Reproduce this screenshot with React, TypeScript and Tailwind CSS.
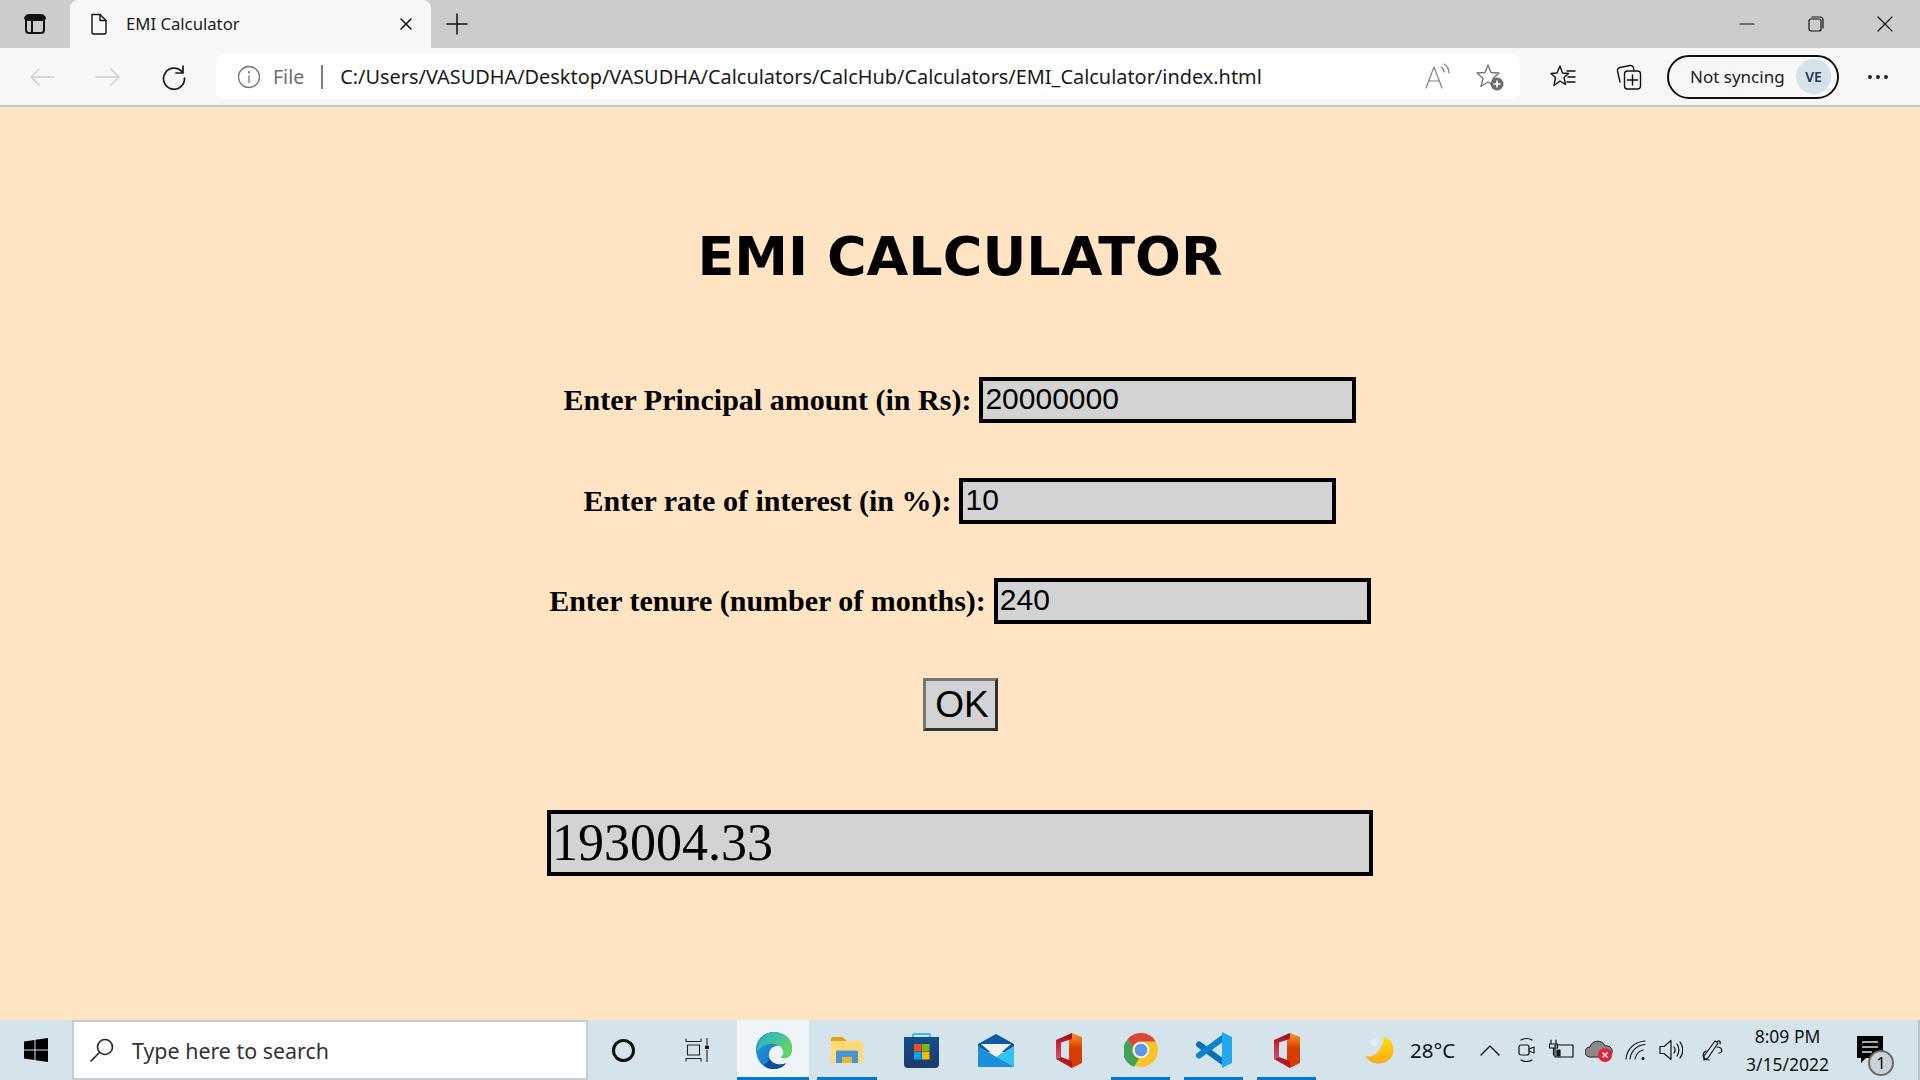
import React from 'react';

const uiFont = { fontFamily: '"Noto Sans", "Open Sans", sans-serif' };

const TileLine: React.FC<{ active?: boolean }> = ({ active }) =>
  active ? <div className="absolute bottom-0 left-0 right-0 h-[3px] bg-[#0078d4]" /> : null;

const Stroke: React.FC<{ w: number; h: number; sw?: number; color?: string; children: React.ReactNode }> = ({ w, h, sw = 1.5, color = '#111', children }) => (
  <svg width={w} height={h} viewBox={`0 0 ${w} ${h}`} fill="none" stroke={color} strokeWidth={sw} strokeLinecap="round" strokeLinejoin="round">
    {children}
  </svg>
);

const EdgeLogo = () => (
  <svg width="37" height="37" viewBox="0 0 38 38">
    <defs>
      <linearGradient id="edgeA" x1="0" y1="0" x2="1" y2="1">
        <stop offset="0" stopColor="#1fa2d8" />
        <stop offset="0.55" stopColor="#1b7fd0" />
        <stop offset="1" stopColor="#0f5aa8" />
      </linearGradient>
      <linearGradient id="edgeB" x1="0" y1="0" x2="1" y2="0.6">
        <stop offset="0" stopColor="#27a9dc" />
        <stop offset="1" stopColor="#62d860" />
      </linearGradient>
    </defs>
    <path d="M19 0C9 0 1 8 1 18c0 11 8 20 17 20 6 0 11-2 14-6-7 3-15 1-17-5-2-5 0-10 5-12 4-2 9-1 11 2 3 3 4 5 4 8 2-2 3-5 3-8C38 7 30 0 19 0z" fill="url(#edgeA)" />
    <path d="M19 0c11 0 19 7 19 17 0 3-1 6-3 8-1 2-4 2-6 2-1 0-2 0-3-1 2-1 3-3 3-5 0-5-5-9-12-9-5 0-10 2-15 8C3 9 9 0 19 0z" fill="url(#edgeB)" />
    <path d="M15 27c2 6 10 8 17 5-3 4-8 6-14 6-3 0-7-2-9-5 2 0 5-2 6-6z" fill="#114f9a" />
  </svg>
);

const ExplorerLogo = () => (
  <svg width="32" height="26" viewBox="0 0 32 26">
    <path d="M0 2a2 2 0 0 1 2-2h9l4 3v3H0z" fill="#e0a40c" />
    <path d="M0 4h30a2 2 0 0 1 2 2v18a2 2 0 0 1-2 2H2a2 2 0 0 1-2-2z" fill="#fddc78" />
    <path d="M5 26V15a1.500 1.500 0 0 1 1.500-1.500h19A1.500 1.500 0 0 1 27 15v11h-6v-6H11v6z" fill="#4a94d2" />
    <rect x="11" y="20" width="10" height="6" fill="#edb62c" />
  </svg>
);

const StoreLogo = () => (
  <svg width="35" height="35" viewBox="0 0 35 35">
    <defs>
      <linearGradient id="storeBody" x1="0" y1="0" x2="0" y2="1">
        <stop offset="0" stopColor="#12508f" />
        <stop offset="1" stopColor="#1c3a68" />
      </linearGradient>
    </defs>
    <path d="M9 6V2a1 1 0 0 1 1-1h15a1 1 0 0 1 1 1v4" fill="none" stroke="#38bdf0" strokeWidth="2" />
    <path d="M0 4h35v27a4 4 0 0 1-4 4H4a4 4 0 0 1-4-4z" fill="url(#storeBody)" />
    <rect x="10" y="11" width="7.500" height="7.500" fill="#f25022" />
    <rect x="18" y="11" width="7.500" height="7.500" fill="#7fba00" />
    <rect x="10" y="19" width="7.500" height="7.500" fill="#00a4ef" />
    <rect x="18" y="19" width="7.500" height="7.500" fill="#ffb900" />
  </svg>
);

const MailLogo = () => (
  <svg width="36" height="33" viewBox="0 0 36 33">
    <path d="M0 10 18 0l18 10v8H0z" fill="#0c59a4" />
    <path d="M3 10h30l-15 13z" fill="#f1f1f1" />
    <path d="M0 12l18 11 18-11v21H0z" fill="#33c2f1" />
    <path d="M0 33V12l18 11 18 10z" fill="#1a8fdb" />
  </svg>
);

const OfficeLogo: React.FC<{ id: string }> = ({ id }) => (
  <svg width="28" height="35" viewBox="0 0 28 35">
    <defs>
      <linearGradient id={`${id}R`} x1="0" y1="0" x2="0" y2="1">
        <stop offset="0" stopColor="#f7982a" />
        <stop offset="0.45" stopColor="#d83b01" />
        <stop offset="1" stopColor="#d83b01" />
      </linearGradient>
      <linearGradient id={`${id}L`} x1="0" y1="0" x2="0" y2="1">
        <stop offset="0" stopColor="#8f1015" />
        <stop offset="0.5" stopColor="#d02a3a" />
        <stop offset="1" stopColor="#c2557e" />
      </linearGradient>
    </defs>
    <path d="M14 3 17 0l10 4v26l-10 5-3-2z" fill={`url(#${id}R)`} />
    <path d="M1 7 17 0v6L6 9.500V24l-5 2z" fill={`url(#${id}L)`} />
    <path d="M1 26l5-2 11 4v7z" fill="#b81525" />
  </svg>
);

const ChromeLogo = () => (
  <svg width="34" height="34" viewBox="0 0 34 34">
    <circle cx="17" cy="17" r="17" fill="#fbc42b" />
    <path d="M17 0a17 17 0 0 1 14.7 8.5H17a8.5 8.5 0 0 0-8 5.500L3.500 6.500A17 17 0 0 1 17 0z" fill="#d9473c" />
    <path d="M3.500 6.500 9 14a8.500 8.500 0 0 0 6 11.500L10 34A17 17 0 0 1 3.500 6.500z" fill="#3da45a" />
    <circle cx="17" cy="17" r="8" fill="#fff" />
    <circle cx="17" cy="17" r="6.500" fill="#5a95ee" />
  </svg>
);

const VsCodeLogo = () => (
  <svg width="36" height="36" viewBox="0 0 36 36">
    <path d="M3 12.500 27 30" stroke="#0a70b8" strokeWidth="6" strokeLinecap="round" fill="none" />
    <path d="M3 23.500 27 6" stroke="#0d83cf" strokeWidth="6" strokeLinecap="round" fill="none" />
    <path d="M26 0 36 5v26l-10 5z" fill="#22a8f0" />
  </svg>
);

const Tile: React.FC<{ w: string; active?: boolean; line?: boolean; children: React.ReactNode }> = ({ w, active, line, children }) => (
  <div className={`relative h-full flex items-center justify-center ${w} ${active ? 'bg-[#eef4f8]' : ''}`}>
    {children}
    <TileLine active={active || line} />
  </div>
);

const BrowserChrome = () => (
  <div style={uiFont} className="shrink-0">
    <div className="h-12 bg-[#cccccc] flex items-end">
      <div className="w-[70px] h-12 flex items-center justify-center">
        <Stroke w={22} h={22} sw={2}>
          <rect x="2" y="2" width="18" height="18" rx="3" />
          <path d="M2 7h18M8 7v13" />
          <path d="M2 5h18" strokeWidth={4} />
        </Stroke>
      </div>
      <div className="w-[361px] h-12 bg-[#f7f7f7] rounded-t-lg flex items-center pl-[19px] pr-[18px]">
        <Stroke w={20} h={24} sw={1.4}>
          <path d="M3 2.500h8l6 6v12a1.500 1.500 0 0 1-1.500 1.500h-11a1.500 1.500 0 0 1-1.500-1.500z" />
          <path d="M11 2.500v6h6" />
        </Stroke>
        <span className="ml-[17px] text-[16.7px] text-[#1a1a1a]">EMI Calculator</span>
        <span className="ml-auto">
          <Stroke w={14} h={14} sw={1.6}><path d="M2 2l10 10M12 2 2 12" /></Stroke>
        </span>
      </div>
      <div className="w-[15px] h-12" />
      <div className="h-12 flex items-center">
        <Stroke w={22} h={22} sw={1.5}><path d="M11 1v20M1 11h20" /></Stroke>
      </div>
      <div className="ml-auto h-12 flex items-center">
        <div className="w-[68px] flex justify-center"><Stroke w={16} h={16} sw={1.2}><path d="M1 8h14" /></Stroke></div>
        <div className="w-[69px] flex justify-center">
          <Stroke w={16} h={16} sw={1.2}>
            <rect x="1" y="3" width="12" height="12" rx="2" />
            <path d="M4 1h8a3 3 0 0 1 3 3v8" />
          </Stroke>
        </div>
        <div className="w-[70px] flex justify-center"><Stroke w={16} h={16} sw={1.2}><path d="M1 1l14 14M15 1 1 15" /></Stroke></div>
      </div>
    </div>
    <div className="h-[59px] bg-[#f7f7f7] border-b-2 border-[#c4c4c4] flex items-start pt-[6px]">
      <div className="w-[216px] h-[45px] flex items-center pl-[29px]">
        <Stroke w={26} h={20} sw={1.4} color="#cfcfcf"><path d="M25 10H2M10 2 2 10l8 8" /></Stroke>
        <span className="ml-[40px]"><Stroke w={26} h={20} sw={1.4} color="#cfcfcf"><path d="M1 10h23M16 2l8 8-8 8" /></Stroke></span>
        <span className="ml-[40px]">
          <Stroke w={26} h={26} sw={1.7} color="#1a1a1a">
            <path d="M21.500 8.500A10.500 10.500 0 1 0 23.500 14" />
            <path d="M22 2v7h-7" />
          </Stroke>
        </span>
      </div>
      <div className="w-[1304px] h-[45px] bg-white rounded-lg flex items-center pl-[21px] pr-[16px]">
        <Stroke w={24} h={24} sw={1.3} color="#777">
          <circle cx="12" cy="12" r="10.500" />
          <path d="M12 11v6.500" />
          <path d="M12 7v.5" strokeWidth={2} />
        </Stroke>
        <span className="ml-[12px] text-[19.5px] text-[#6e6e6e]">File</span>
        <span className="ml-[17px] h-[24px] w-[2px] bg-[#808080]" />
        <span className="ml-[17px] text-[19.9px] text-[#1a1a1a] whitespace-nowrap">C:/Users/VASUDHA/Desktop/VASUDHA/Calculators/CalcHub/Calculators/EMI_Calculator/index.html</span>
        <span className="ml-auto">
          <Stroke w={26} h={28} sw={1.2} color="#808080">
            <path d="M2 25 10 4l8 21M5 18h10" />
            <path d="M17 4c2 1 3 3 3 5M20 1c3 2 5 5 5 9" />
          </Stroke>
        </span>
        <span className="ml-[26px]">
          <svg width="28" height="28" viewBox="0 0 28 28">
            <path d="M12 2l3 7.500 8 .5-6 5.500 2 8-7-4.500-7 4.500 2-8-6-5.500 8-.5z" fill="none" stroke="#777" strokeWidth="1.400" strokeLinejoin="round" />
            <circle cx="21" cy="21" r="6.500" fill="#6c6c6c" />
            <path d="M21 17.500v7M17.500 21h7" stroke="#fff" strokeWidth="1.600" />
          </svg>
        </span>
      </div>
      <div className="w-[400px] h-[45px] flex items-center">
        <span className="ml-[30px]">
          <Stroke w={26} h={28} sw={1.4} color="#111">
            <path d="M10 3l2.500 7 6 .5-4.500 4 1.500 7-5.500-3.500-6 4.500 1.500-8L1 10.500l6-.5z" />
            <path d="M17 8h8M18 14h7M17 19h8" />
          </Stroke>
        </span>
        <span className="ml-[40px]">
          <Stroke w={26} h={30} sw={1.4} color="#111">
            <path d="M4 20 1.500 9a3 3 0 0 1 2.500-3.500L14 3.500a3 3 0 0 1 3.500 2.500l.5 2" />
            <rect x="8.500" y="9" width="16" height="18" rx="3" />
            <path d="M16.500 13v10M11.500 18h10" />
          </Stroke>
        </span>
        <div className="ml-[25px] w-[172px] h-[44px] rounded-full border-2 border-[#111] bg-[#f7f7f7] flex items-center pl-[21px] pr-[6px]">
          <span className="text-[17px] text-[#1a1a1a] whitespace-nowrap">Not syncing</span>
          <span className="ml-auto w-[35px] h-[35px] rounded-full bg-[#d4e3ea] flex items-center justify-center text-[14px] font-semibold text-[#1f3a4d]">VE</span>
        </div>
        <span className="ml-[29px] flex gap-[4px]">
          <span className="w-[4px] h-[4px] rounded-full bg-[#222]" />
          <span className="w-[4px] h-[4px] rounded-full bg-[#222]" />
          <span className="w-[4px] h-[4px] rounded-full bg-[#222]" />
        </span>
      </div>
    </div>
  </div>
);

const Field: React.FC<{ label: string; value: string; className?: string }> = ({ label, value, className }) => (
  <div className={`flex items-center h-[46px] ${className ?? ''}`}>
    <label style={{ fontFamily: '"Liberation Serif", serif' }} className="pb-[2px] text-[30px] font-bold text-black whitespace-nowrap">{label}</label>
    <input
      readOnly
      value={value}
      style={{ fontFamily: '"Liberation Sans", sans-serif' }}
      className="ml-2 w-[377px] h-[46px] border-4 border-black bg-[#d3d3d3] pl-[2px] pb-[2px] text-[30px] text-black outline-none"
    />
  </div>
);

const Taskbar = () => (
  <div style={uiFont} className="h-[60px] shrink-0 bg-[#d5e3ea] flex items-center text-[#111]">
    <div className="w-[72px] h-full flex items-center justify-center">
      <svg width="24" height="24" viewBox="0 0 24 24" fill="#000">
        <path d="M0 3.500 10.500 2v9.500H0zM11.500 1.800 24 0v11.500H11.500zM0 12.500h10.500V22L0 20.500zM11.500 12.500H24V24l-12.500-1.800z" />
      </svg>
    </div>
    <div className="w-[516px] h-full bg-white border-2 border-[#c6cdd2] flex items-center pl-[15px]">
      <Stroke w={26} h={26} sw={1.6} color="#222">
        <circle cx="16" cy="10" r="7.500" />
        <path d="M10.500 15.500 2 24" />
      </Stroke>
      <span className="ml-[17px] pt-[3px] text-[21.4px] text-[#333] whitespace-nowrap">Type here to search</span>
    </div>
    <div className="w-[72px] h-full flex items-center justify-center ml-[-1px]">
      <span className="w-[23px] h-[23px] rounded-full border-[3px] border-[#111]" />
    </div>
    <div className="w-[75px] h-full flex items-center justify-center">
      <Stroke w={24} h={24} sw={1.1} color="#222">
        <path d="M1 1v2.500h15V1M2.500 7h12v10h-12zM1 23v-2.500h15V23M22 .5v6M22 12v11.500" />
        <path d="M20.500 8h3v2.500h-3z" fill="#111" />
      </Stroke>
    </div>
    <div className="w-[3px]" />
    <Tile w="w-[72px]" active><EdgeLogo /></Tile>
    <div className="w-[8px]" />
    <Tile w="w-[60px]" line><ExplorerLogo /></Tile>
    <Tile w="w-[88px]"><StoreLogo /></Tile>
    <Tile w="w-[62px]"><MailLogo /></Tile>
    <Tile w="w-[84px]"><OfficeLogo id="officeA" /></Tile>
    <Tile w="w-[59px]" line><ChromeLogo /></Tile>
    <div className="w-[14px]" />
    <Tile w="w-[59px]" line><VsCodeLogo /></Tile>
    <div className="w-[14px]" />
    <Tile w="w-[59px]" line><OfficeLogo id="officeB" /></Tile>
    <div className="w-[46px]" />
    <div className="w-[34px] flex justify-center">
      <svg width="30" height="28" viewBox="0 0 30 28">
        <defs>
          <linearGradient id="moonFill" x1="0" y1="0" x2="0" y2="1">
            <stop offset="0" stopColor="#ffe100" />
            <stop offset="1" stopColor="#f8a81c" />
          </linearGradient>
        </defs>
        <path d="M20 1C27 3 29.500 9 29.500 14 29.500 22 23 27.500 15 27.500 9 27.500 4 25 1.500 20 5.500 21 9 20 12 18 17 14 19 7 20 1z" fill="url(#moonFill)" />
        <circle cx="6" cy="8" r="3.500" fill="#cfe3ef" />
        <circle cx="10" cy="6.500" r="3.500" fill="#e4eff5" />
      </svg>
    </div>
    <span className="ml-[14px] w-[61px] text-[20.5px] whitespace-nowrap">28°C</span>
    <div className="w-[38px] flex justify-center"><Stroke w={20} h={12} sw={1.4}><path d="M1 11l9-9 9 9" /></Stroke></div>
    <div className="w-[35px] flex justify-center">
      <Stroke w={18} h={26} sw={1.2}>
        <path d="M3 3c3-2 8-2 11 0M3 23c3 2 8 2 11 0" />
        <rect x="1" y="8" width="10" height="10" rx="2" />
        <path d="M11 12l5-2v6l-5-2" />
      </Stroke>
    </div>
    <div className="w-[35px] flex justify-center">
      <Stroke w={26} h={22} sw={1.2}>
        <path d="M2 1v4M7 1v4M0.500 5h8v4H0.500zM4.500 9v7" />
        <rect x="6" y="6" width="18" height="12" />
        <path d="M8 11h3v6H8z" fill="#111" />
      </Stroke>
    </div>
    <div className="w-[39px] flex justify-center">
      <svg width="28" height="26" viewBox="0 0 28 26">
        <path d="M5 20a5 5 0 0 1 0-10 8 8 0 0 1 15-1 5.500 5.500 0 0 1 3 11z" fill="#8a8a8a" stroke="#222" strokeWidth="1" />
        <circle cx="20" cy="18" r="7" fill="#e0243a" />
        <path d="M17.500 15.500l5 5M22.500 15.500l-5 5" stroke="#fff" strokeWidth="1.500" />
      </svg>
    </div>
    <div className="w-[35px] flex justify-center">
      <Stroke w={22} h={22} sw={1.1}>
        <path d="M1 20C2 10 9 3 20 2M5 20C6 12 12 6 20 5.500M10 20c1-5 4-8 8-9" />
        <circle cx="18" cy="19.500" r="1" fill="#111" />
      </Stroke>
    </div>
    <div className="w-[36px] flex justify-center">
      <Stroke w={24} h={22} sw={1.2}>
        <path d="M1 7.500h4l7-6v19l-7-6H1z" />
        <path d="M15 8c1.500 2 1.500 4 0 6M18 5c2.500 4 2.500 8 0 12M21 3c3.500 5 3.500 11 0 16" />
      </Stroke>
    </div>
    <div className="w-[47px] flex justify-center">
      <Stroke w={24} h={24} sw={1.2}>
        <path d="M3 18 14 3l3 2-10 15-4 2zM16 4c2-2 4-1 3 2" />
        <path d="M8 22c-6 0-8-6-3-9M16 9c6 0 6 6 2 6" />
      </Stroke>
    </div>
    <div className="w-[103px] flex flex-col items-center text-[17.5px] leading-[28px] whitespace-nowrap">
      <span>8:09 PM</span>
      <span>3/15/2022</span>
    </div>
    <div className="w-[62px] flex justify-center relative">
      <svg width="26" height="28" viewBox="0 0 26 28">
        <path d="M0 0h26v22H9l-5 5v-5H0z" fill="#000" />
        <path d="M5 6h16M5 11h16M5 16h10" stroke="#d5e3ea" strokeWidth="1.400" />
      </svg>
      <span className="absolute left-[29px] top-[14px] w-[26px] h-[26px] rounded-full border-2 border-[#6b6b6b] bg-[#c9d3d8] flex items-center justify-center text-[17px]">1</span>
    </div>
    <div className="w-[2px] h-full bg-[#b9c3c9] ml-auto" />
  </div>
);

export default function App() {
  return (
    <div className="w-[1920px] h-[1080px] flex flex-col overflow-hidden bg-[#ffe4c4]">
      <BrowserChrome />
      <main className="flex-1 flex flex-col items-center">
        <h1 style={{ fontFamily: '"DejaVu Sans", Verdana, sans-serif' }} className="mt-[120px] text-[54px] leading-[60px] font-bold text-black whitespace-nowrap">EMI CALCULATOR</h1>
        <Field label="Enter Principal amount (in Rs):" value="20000000" className="mt-[90px]" />
        <Field label="Enter rate of interest (in %):" value="10" className="mt-[55px]" />
        <Field label="Enter tenure (number of months):" value="240" className="mt-[54px]" />
        <button
          style={{ fontFamily: '"Liberation Sans", sans-serif', borderColor: '#767676 #333 #333 #767676' }}
          className="mt-[54px] w-[75px] h-[53px] border-[3px] bg-[#d3d3d3] pl-[4px] pb-[1px] text-[37px] leading-none text-black"
        >
          OK
        </button>
        <div
          style={{ fontFamily: '"Liberation Serif", serif' }}
          className="mt-[79px] w-[826px] h-[66px] border-4 border-black bg-[#d3d3d3] pl-[1px] flex items-center text-[52px] text-black"
        >
          193004.33
        </div>
      </main>
      <Taskbar />
    </div>
  );
}
